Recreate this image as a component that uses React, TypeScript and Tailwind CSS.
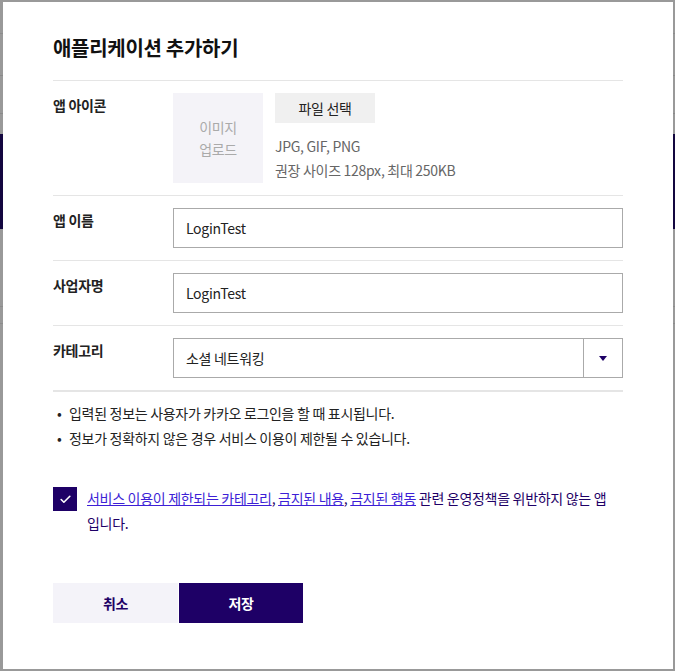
import { Check } from 'lucide-react';

const FONT = { fontFamily: '"Noto Sans CJK KR", "Noto Sans", sans-serif' };

function Row({ label, children, last }: { label: string; children: React.ReactNode; last?: boolean }) {
  return (
    <div className={`flex py-[12px] ${last ? '' : 'border-b border-[#e5e5e5]'}`}>
      <div className="w-[120px] shrink-0 text-[14px] leading-[24px] font-bold text-[#222]">{label}</div>
      <div className="flex-1">{children}</div>
    </div>
  );
}

export default function App() {
  return (
    <div className="relative h-[671px] w-full overflow-hidden bg-[#999999] tracking-[-0.3px]" style={FONT}>
      {/* page behind the dimmed overlay */}
      <div className="h-[34px] border-b border-[#8c8c8c]" />
      <div className="h-[42px] border-b border-[#8a8a8a]" />
      <div className="h-[38px] border-b border-[#8a8a8a]" />
      <div className="mt-[20px] h-[95px] bg-[#13063f]" />
      <div className="mt-[77px] h-[1px] bg-[#8c8c8c]" />
      <div className="mt-[16px] h-[1px] bg-[#8c8c8c]" />

      {/* modal */}
      <div className="absolute left-[3px] top-[2px] w-[670px] h-[667px] bg-white px-[50px] pt-[31px]">
        <h1 className="text-[20px] leading-[30px] font-bold text-[#111] pb-[17px] border-b border-[#e5e5e5]">
          애플리케이션 추가하기
        </h1>

        <Row label="앱 아이콘">
          <div className="flex gap-[12px]">
            <div className="w-[90px] h-[90px] bg-[#f4f3f8] flex items-center justify-center text-center text-[14px] leading-[22px] text-[#aaaaaa]">
              이미지
              <br />
              업로드
            </div>
            <div>
              <button className="w-[100px] h-[30px] bg-[#f0f0f0] text-[14px] text-[#222] tracking-[-0.3px]">파일 선택</button>
              <div className="mt-[11px] text-[14px] leading-[24px] text-[#666]">
                <p>JPG, GIF, PNG</p>
                <p>권장 사이즈 128px, 최대 250KB</p>
              </div>
            </div>
          </div>
        </Row>

        <Row label="앱 이름">
          <div className="h-[40px] border border-[#aaaaaa] px-[12px] flex items-center text-[14px] text-[#222]">LoginTest</div>
        </Row>

        <Row label="사업자명">
          <div className="h-[40px] border border-[#aaaaaa] px-[12px] flex items-center text-[14px] text-[#222]">LoginTest</div>
        </Row>

        <Row label="카테고리">
          <div className="h-[40px] border border-[#aaaaaa] flex text-[14px] text-[#222]">
            <div className="flex-1 px-[12px] flex items-center">소셜 네트워킹</div>
            <div className="w-[39px] border-l border-[#aaaaaa] flex items-center justify-center">
              <svg width="8" height="5" viewBox="0 0 8 5">
                <path d="M0 0H8L4 5Z" fill="#1e0066" />
              </svg>
            </div>
          </div>
        </Row>

        <div className="border-t border-[#e5e5e5] pt-[9px] text-[14px] leading-[25px] text-[#222]">
          <p className="flex">
            <span className="w-[16px] pl-[4px]">•</span>입력된 정보는 사용자가 카카오 로그인을 할 때 표시됩니다.
          </p>
          <p className="flex">
            <span className="w-[16px] pl-[4px]">•</span>정보가 정확하지 않은 경우 서비스 이용이 제한될 수 있습니다.
          </p>
        </div>

        <div className="mt-[35px] flex items-start gap-[10px]">
          <div className="w-[24px] h-[24px] shrink-0 bg-[#1e0066] flex items-center justify-center mt-[1px]">
            <Check className="w-[13px] h-[13px] text-white" strokeWidth={3} />
          </div>
          <p className="flex-1 break-all pr-[11px] text-[14px] leading-[25px] text-[#1e0066]">
            <span className="underline text-[#3d1fd6]">서비스 이용이 제한되는 카테고리</span>,{' '}
            <span className="underline text-[#3d1fd6]">금지된 내용</span>,{' '}
            <span className="underline text-[#3d1fd6]">금지된 행동</span> 관련 운영정책을 위반하지 않는 앱입니다.
          </p>
        </div>

        <div className="mt-[47px] flex gap-[1px]">
          <button className="w-[125px] h-[40px] bg-[#f4f3f9] text-[14px] font-bold text-[#1e0066]">취소</button>
          <button className="w-[124px] h-[40px] bg-[#1e0066] text-[14px] font-bold text-white">저장</button>
        </div>
      </div>
    </div>
  );
}
